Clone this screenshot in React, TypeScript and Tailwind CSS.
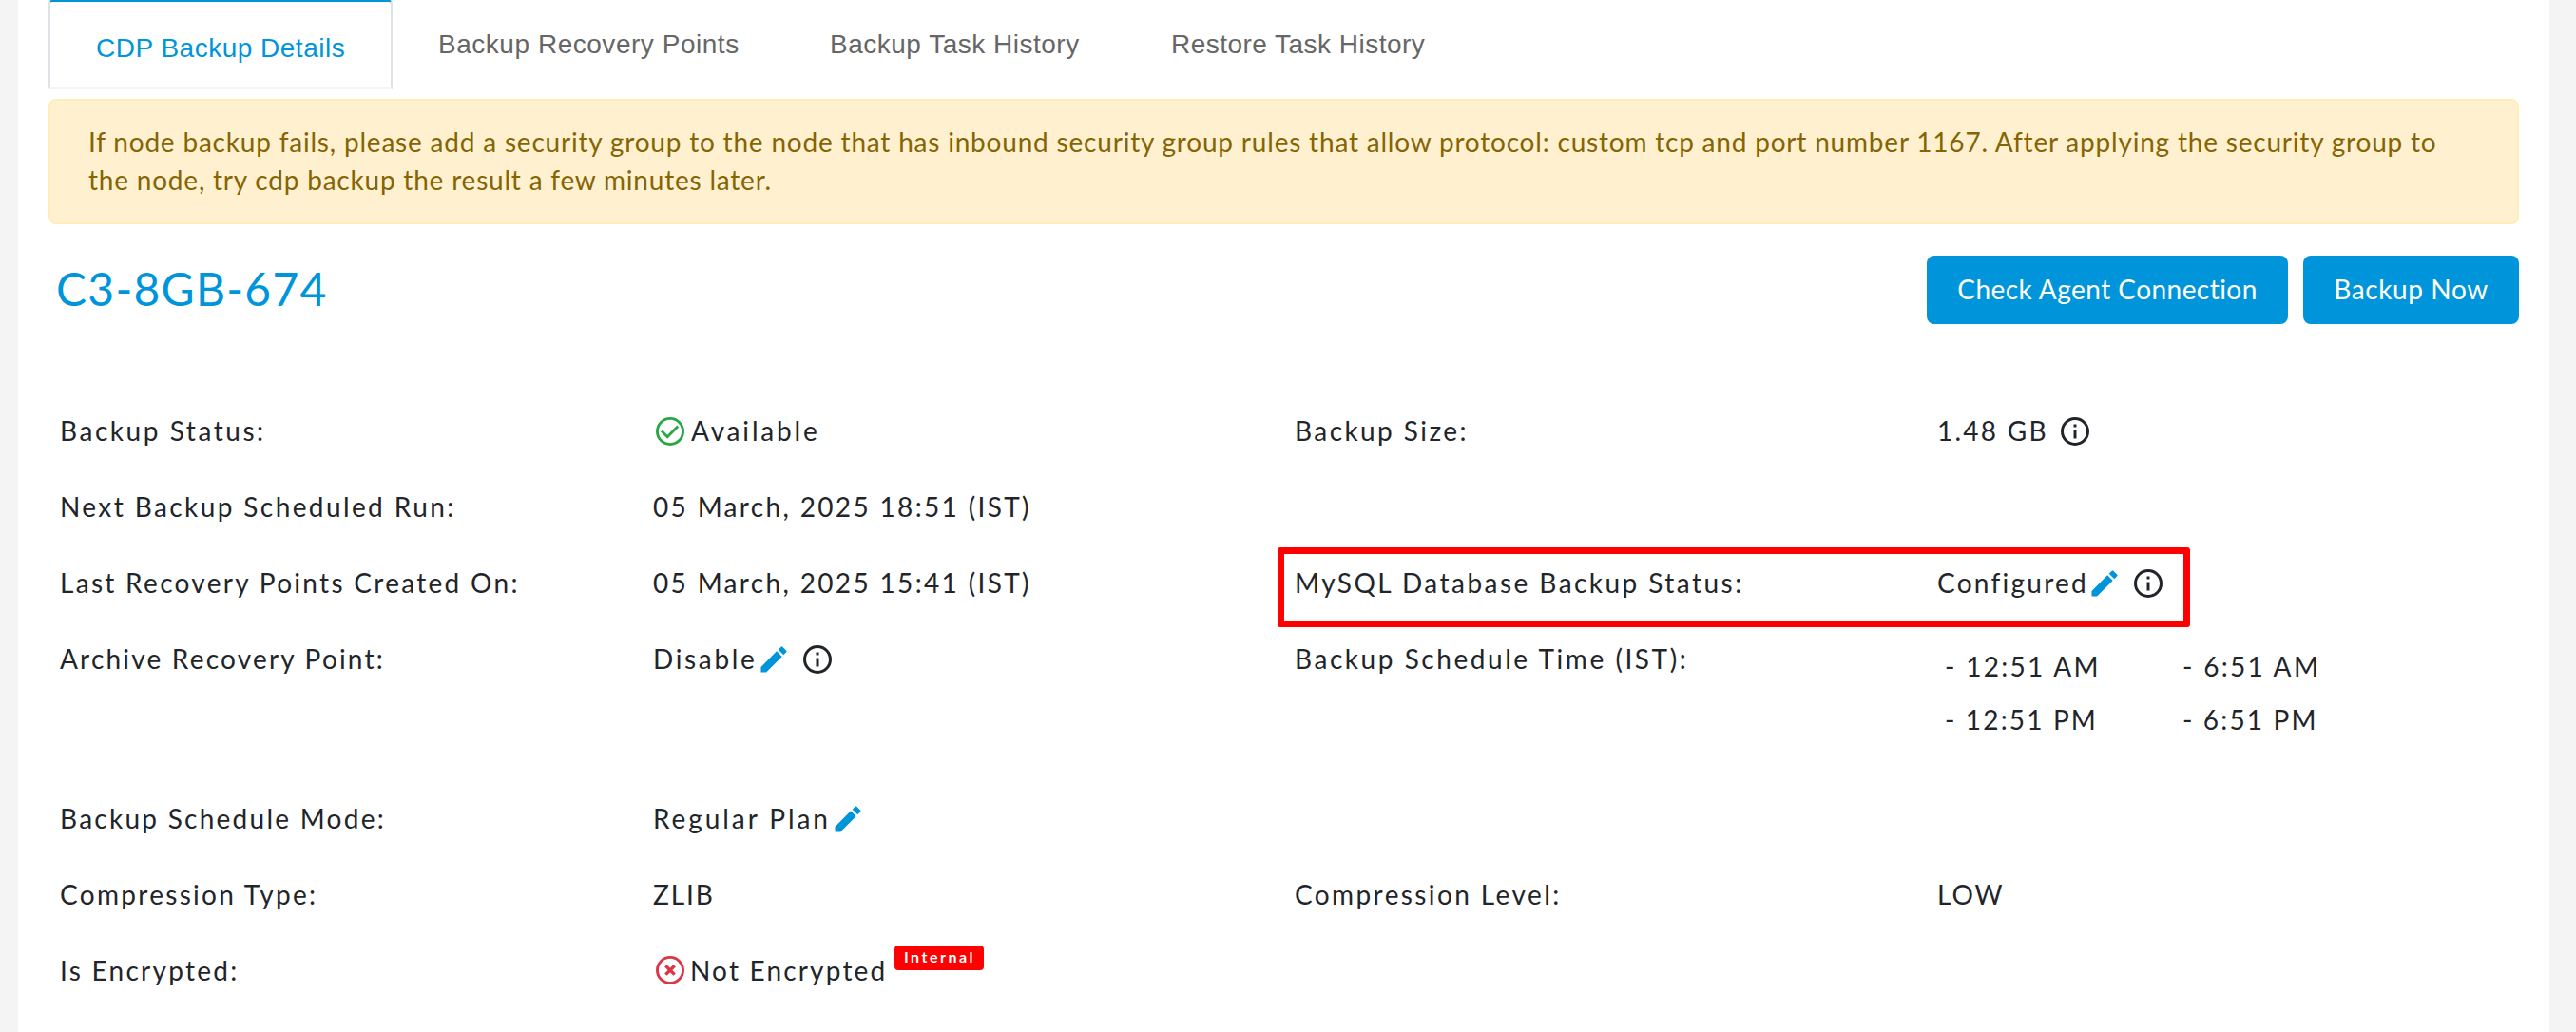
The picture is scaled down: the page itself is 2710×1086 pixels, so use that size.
import { ReactNode } from "react";

const InfoIcon = () => (
  <svg viewBox="0 0 24 24" className="size-9 shrink-0 fill-[#212529]">
    <path d="M11 9h2V7h-2m1 13c-4.41 0-8-3.59-8-8s3.59-8 8-8 8 3.59 8 8-3.59 8-8 8m0-18A10 10 0 0 0 2 12a10 10 0 0 0 10 10 10 10 0 0 0 10-10A10 10 0 0 0 12 2m-1 15h2v-6h-2v6z" />
  </svg>
);

const PencilIcon = () => (
  <svg viewBox="0 0 24 24" className="size-9 shrink-0 fill-[#0095da]">
    <path d="M20.71 7.04c.39-.39.39-1.04 0-1.41l-2.34-2.34c-.37-.39-1.02-.39-1.41 0l-1.84 1.83 3.75 3.75M3 17.25V21h3.75L17.81 9.93l-3.75-3.75L3 17.25z" />
  </svg>
);

const CheckIcon = () => (
  <svg viewBox="0 0 24 24" className="size-9 shrink-0 fill-none stroke-[#28a745]">
    <circle cx="12" cy="12" r="9.05" strokeWidth="1.9" />
    <path d="M6 11.7l4.1 4.1L17.5 8.4" strokeWidth="1.9" />
  </svg>
);

const CrossIcon = () => (
  <svg viewBox="0 0 24 24" className="mb-0.5 size-9 shrink-0 fill-none stroke-[#dc3545]">
    <circle cx="12" cy="12" r="9.05" strokeWidth="1.9" />
    <path d="M8.9 8.9l6.2 6.2M15.1 8.9l-6.2 6.2" strokeWidth="2.3" />
  </svg>
);

type RowProps = {
  label: ReactNode;
  value: ReactNode;
  label2?: ReactNode;
  value2?: ReactNode;
};

const Row = ({ label, value, label2, value2 }: RowProps) => (
  <div className="grid h-20 grid-cols-[624px_675px_676px_1fr]">
    <div className="flex h-20 items-center">{label}</div>
    <div className="flex h-20 items-center">{value}</div>
    <div className="flex h-20 items-center">{label2}</div>
    <div className="flex h-20 items-center">{value2}</div>
  </div>
);

const App = () => {
  return (
    <div className="h-[1086px] w-full overflow-hidden bg-[#f4f4f4] pl-[19px] pr-7 font-['Lato',sans-serif] text-[28px] leading-10 text-[#212529]">
      <div className="flex h-full flex-col bg-white pl-8 pr-8">
        <nav className="flex h-[94px] font-['Liberation_Sans',sans-serif] text-[#666]">
          <a className="flex h-[94px] w-[362px] items-start rounded-t-[4px] border-2 border-x-[#dee2e6] border-b-[#f4f4f4] border-t-[#0095da] pl-[48px] pt-[29px] tracking-[0.5px] whitespace-nowrap text-[#0095da]">
            CDP Backup Details
          </a>
          <a className="w-[412px] pl-[48px] pt-[27px] tracking-[0.53px] whitespace-nowrap">Backup Recovery Points</a>
          <a className="w-[359px] pl-[48px] pt-[27px] tracking-[0.5px] whitespace-nowrap">Backup Task History</a>
          <a className="pl-[48px] pt-[27px] tracking-[0.47px] whitespace-nowrap">Restore Task History</a>
        </nav>

        <div className="mt-[10px] h-[132px] rounded-lg border-2 border-[#ffeeba] bg-[#fff1cf] pl-10 pt-[23px] text-[#856404] whitespace-nowrap">
          <p className="tracking-[0.8px]">
            If node backup fails, please add a security group to the node that has inbound security group rules that allow protocol: custom tcp and port number 1167. After applying the security group to
          </p>
          <p className="tracking-[0.79px]">the node, try cdp backup the result a few minutes later.</p>
        </div>

        <div className="mt-[33px] flex h-[72px] items-start justify-between">
          <h1 className="pl-2 text-[48px] leading-[69px] tracking-[1.26px] text-[#0095da]">C3-8GB-674</h1>
          <div className="flex gap-4 text-white">
            <button className="h-[72px] w-[380px] rounded-lg bg-[#0095da] pb-0.5 tracking-[0.45px]">Check Agent Connection</button>
            <button className="h-[72px] w-[227px] rounded-lg bg-[#0095da] pb-0.5 tracking-[0.61px]">Backup Now</button>
          </div>
        </div>

        <div className="mt-[73px] pl-3 whitespace-nowrap">
          <Row
            label={<span className="pb-0.5 tracking-[2.55px]">Backup Status:</span>}
            value={
              <>
                <CheckIcon />
                <span className="pb-0.5 pl-1 tracking-[2.82px]">Available</span>
              </>
            }
            label2={<span className="pb-0.5 tracking-[2.42px]">Backup Size:</span>}
            value2={
              <>
                <span className="w-[127px] pb-0.5 tracking-[2.26px]">1.48 GB</span>
                <InfoIcon />
              </>
            }
          />
          <Row
            label={<span className="pb-0.5 tracking-[2.4px]">Next Backup Scheduled Run:</span>}
            value={<span className="pb-0.5 tracking-[2.34px]">05 March, 2025 18:51 (IST)</span>}
          />
          <Row
            label={<span className="pb-0.5 tracking-[2.3px]">Last Recovery Points Created On:</span>}
            value={<span className="pb-0.5 tracking-[2.34px]">05 March, 2025 15:41 (IST)</span>}
            label2={
              <div className="relative pb-0.5 tracking-[2.45px]">
                MySQL Database Backup Status:
                {/* highlight frame around the MySQL status */}
                <div className="absolute -left-[18px] -top-[17px] h-[84px] w-[960px] rounded-[3px] border-[7px] border-[#ff0000]" />
              </div>
            }
            value2={
              <>
                <span className="w-[158px] pb-0.5 tracking-[2.25px]">Configured</span>
                <PencilIcon />
                <span className="pl-[10px]">
                  <InfoIcon />
                </span>
              </>
            }
          />
          <div className="h-[168px]">
            <Row
              label={<span className="pb-0.5 tracking-[2.2px]">Archive Recovery Point:</span>}
              value={
                <>
                  <span className="w-[109px] pb-0.5 tracking-[2.66px]">Disable</span>
                  <PencilIcon />
                  <span className="pl-[10px]">
                    <InfoIcon />
                  </span>
                </>
              }
              label2={<span className="pb-0.5 tracking-[2.55px]">Backup Schedule Time (IST):</span>}
              value2={
                <div className="grid grid-cols-[250px_1fr] gap-y-4 self-start pl-[8px] pt-[27px] tracking-[2.3px]">
                  <span>- 12:51 AM</span>
                  <span>- 6:51 AM</span>
                  <span className="tracking-[2.15px]">- 12:51 PM</span>
                  <span className="tracking-[2.15px]">- 6:51 PM</span>
                </div>
              }
            />
          </div>
          <Row
            label={<span className="pb-0.5 tracking-[2.26px]">Backup Schedule Mode:</span>}
            value={
              <>
                <span className="w-[187px] pb-0.5 tracking-[2.93px]">Regular Plan</span>
                <PencilIcon />
              </>
            }
          />
          <Row
            label={<span className="pb-0.5 tracking-[2.3px]">Compression Type:</span>}
            value={<span className="pb-0.5 tracking-[1.9px]">ZLIB</span>}
            label2={<span className="pb-0.5 tracking-[2.4px]">Compression Level:</span>}
            value2={<span className="pb-0.5 tracking-[2px]">LOW</span>}
          />
          <Row
            label={<span className="pb-0.5 tracking-[2.27px]">Is Encrypted:</span>}
            value={
              <>
                <CrossIcon />
                <span className="w-[218px] pb-0.5 pl-[3px] tracking-[2.17px]">Not Encrypted</span>
                <span className="mb-[29px] h-[26px] w-[94px] rounded bg-[#ff0000] pl-[10px] text-[16px] font-bold leading-[23px] tracking-[2.5px] text-white">
                  Internal
                </span>
              </>
            }
          />
        </div>
      </div>
    </div>
  );
};

export default App;
